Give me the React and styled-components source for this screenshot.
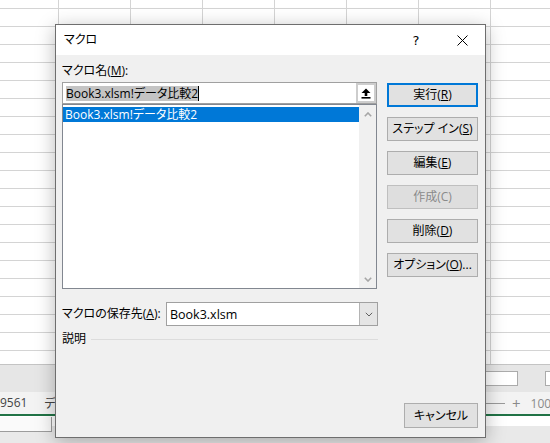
import React from 'react';
import styled, { createGlobalStyle } from 'styled-components';

const uiFont = `"Open Sans", "Noto Sans CJK JP", sans-serif`;

const GlobalStyle = createGlobalStyle`
  html, body {
    margin: 0;
    padding: 0;
  }
  body {
    width: 550px;
    height: 443px;
    overflow: hidden;
    background: #fff;
  }
`;

const Screen = styled.div`
  position: relative;
  width: 550px;
  height: 443px;
  overflow: hidden;
  display: flex;
  flex-direction: column;
  font-family: ${uiFont};
  font-size: 12px;
  font-feature-settings: "palt";
  color: #000;
`;

/* excel behind the dialog */

const Sheet = styled.div`
  flex: none;
  height: 364px;
  background-color: #fff;
  background-image:
    repeating-linear-gradient(to bottom, transparent 0, transparent 8px, #d4d4d4 8px, #d4d4d4 9px, transparent 9px, transparent 18px),
    repeating-linear-gradient(to right, transparent 0, transparent 58px, #d4d4d4 58px, #d4d4d4 59px, transparent 59px, transparent 72px);
`;

const TabBar = styled.div`
  flex: none;
  height: 27px;
  border-top: 1px solid #c4c4c4;
  background: #e6e6e6;
  display: flex;
  align-items: center;
  padding-left: 430px;
`;

const ScrollBox = styled.div`
  flex: none;
  width: ${p => p.$w}px;
  height: 13px;
  margin-left: ${p => p.$gap || 0}px;
  background: #fff;
  border: 1px solid #ababab;
`;

const StatusBar = styled.div`
  flex: none;
  height: 22px;
  background: #f3f3f3;
  display: flex;
  align-items: center;
  white-space: nowrap;
  color: #444;
`;

const StatusLeft = styled.div`
  flex: none;
  width: 430px;
  display: flex;
  gap: 17px;
`;

const ZoomTrack = styled.div`
  flex: none;
  width: 75px;
  height: 1px;
  background: #9a9a9a;
`;

const ZoomText = styled.span`
  flex: none;
  margin-left: ${p => p.$gap}px;
  color: #8a8a8a;
  font-size: ${p => p.$size || 12}px;
`;

const GreenRule = styled.div`
  flex: none;
  height: 2px;
  background: #217346;
`;

const Footer = styled.div`
  flex: 1;
  background: linear-gradient(to bottom, #fff 0, #fff 10px, #e9e9e9 10px);
`;

const FooterBox = styled.div`
  width: 51px;
  height: 14px;
  margin-top: 1px;
  background: #fafafa;
  border-right: 1px solid #9c9c9c;
  border-bottom: 1px solid #9c9c9c;
`;

/* dialog */

const Dialog = styled.div`
  position: absolute;
  left: 55px;
  top: 24px;
  width: 431px;
  height: 414px;
  box-sizing: border-box;
  border: 1px solid #6e6e6e;
  background: #f0f0f0;
  box-shadow: 0 4px 18px rgba(0, 0, 0, 0.28);
  display: flex;
  flex-direction: column;
`;

const TitleBar = styled.div`
  flex: none;
  height: 30px;
  background: #fff;
  display: flex;
  align-items: center;
`;

const Title = styled.div`
  flex: 1;
  padding-left: 8px;
  line-height: 16px;
`;

const TitleButton = styled.div`
  flex: none;
  width: 46px;
  height: 30px;
  display: flex;
  align-items: center;
  justify-content: center;
  font-family: "DejaVu Sans", sans-serif;
  font-size: 13px;
`;

const Body = styled.div`
  flex: 1;
  display: flex;
  flex-direction: column;
  padding: 8px 7px 9px 6px;
`;

const Label = styled.div`
  line-height: 16px;
  white-space: nowrap;
  margin-bottom: ${p => p.$mb || 0}px;
  flex: ${p => (p.$w ? 'none' : 'initial')};
  width: ${p => (p.$w ? `${p.$w}px` : 'auto')};
`;

const MainRow = styled.div`
  display: grid;
  grid-template-columns: 315px 91px;
  column-gap: 10px;
`;

const LeftCol = styled.div`
  display: flex;
  flex-direction: column;
`;

const NameInput = styled.div`
  box-sizing: border-box;
  height: 22px;
  border: 1px solid #a0a0a0;
  background: #fff;
  display: flex;
  align-items: center;
  padding-left: 3px;
`;

const Selected = styled.span`
  background: #c4c4c4;
  line-height: 15px;
  white-space: nowrap;
`;

const Caret = styled.span`
  width: 1px;
  height: 15px;
  background: #000;
`;

const UpButton = styled.div`
  margin-left: auto;
  box-sizing: border-box;
  width: 20px;
  height: 20px;
  border: 2px solid #cdcdcd;
  background: #fff;
  display: flex;
  align-items: center;
  justify-content: center;
`;

const ListBox = styled.div`
  box-sizing: border-box;
  height: 185px;
  border: 1px solid #828790;
  background: #fff;
  display: flex;
`;

const ListItems = styled.div`
  flex: 1;
  padding-top: 2px;
`;

const ListItem = styled.div`
  height: 15px;
  line-height: 15px;
  padding-left: 2px;
  background: #0078d7;
  color: #fff;
  white-space: nowrap;
`;

const ScrollTrack = styled.div`
  flex: none;
  width: 17px;
  background: #f0f0f0;
  display: flex;
  flex-direction: column;
  align-items: center;
  justify-content: space-between;
  padding: 7px 0 6px;
`;

const ButtonCol = styled.div`
  display: flex;
  flex-direction: column;
  gap: 10px;
  padding-top: 1px;
`;

const Button = styled.div`
  box-sizing: border-box;
  width: ${p => p.$w || 91}px;
  height: ${p => p.$h || 24}px;
  display: flex;
  align-items: center;
  justify-content: center;
  background: ${p => (p.$disabled ? '#dedede' : '#e1e1e1')};
  border: ${p => (p.$default ? '2px solid #0078d7' : p.$disabled ? '1px solid #bfbfbf' : '1px solid #adadad')};
  color: ${p => (p.$disabled ? '#8a8a8a' : '#000')};
  white-space: nowrap;
  line-height: 16px;
`;

const SaveRow = styled.div`
  display: flex;
  align-items: center;
  margin-top: 13px;
  height: 24px;
`;

const Combo = styled.div`
  box-sizing: border-box;
  width: 212px;
  height: 24px;
  border: 1px solid #a0a0a0;
  background: #fff;
  display: flex;
  align-items: stretch;
`;

const ComboText = styled.div`
  flex: 1;
  display: flex;
  align-items: center;
  padding-left: 3px;
  font-size: 12.5px;
`;

const ComboButton = styled.div`
  flex: none;
  width: 17px;
  border-left: 1px solid #b4b4b4;
  background: #e5e5e5;
  display: flex;
  align-items: center;
  justify-content: center;
`;

const GroupRow = styled.div`
  display: flex;
  align-items: center;
  margin-top: 5px;
  height: 16px;
`;

const GroupRule = styled.div`
  flex: 1;
  height: 1px;
  margin: 1px 100px 0 5px;
  background: #dcdcdc;
`;

const FooterRow = styled.div`
  margin-top: auto;
  display: flex;
  justify-content: flex-end;
`;

const Chevron = ({ up, color, w = 8, h = 5, sw = 1.6 }) => (
  <svg width={w} height={h} viewBox="0 0 8 5" style={{ display: 'block' }}>
    <polyline
      points={up ? '0.8,4.2 4,1 7.2,4.2' : '0.8,0.8 4,4 7.2,0.8'}
      fill="none"
      stroke={color}
      strokeWidth={sw}
    />
  </svg>
);

const UpArrowIcon = () => (
  <svg width="10" height="11" viewBox="0 0 10 11" style={{ display: 'block' }}>
    <polygon points="5,0.5 9.5,5 6.3,5 6.3,8 3.7,8 3.7,5 0.5,5" fill="#000" />
    <rect x="0.5" y="9" width="9" height="1.6" fill="#000" />
  </svg>
);

const CloseIcon = () => (
  <svg width="11" height="11" viewBox="0 0 11 11" style={{ display: 'block' }}>
    <path d="M0.5 0.5 L10.5 10.5 M10.5 0.5 L0.5 10.5" stroke="#000" strokeWidth="1" />
  </svg>
);

const buttons = [
  { label: '実行', key: 'R', isDefault: true },
  { label: 'ステップ イン', key: 'S' },
  { label: '編集', key: 'E' },
  { label: '作成', key: 'C', disabled: true },
  { label: '削除', key: 'D' },
  { label: 'オプション', key: 'O', tail: '...' },
];

export default function App() {
  return (
    <Screen>
      <GlobalStyle />
      <Sheet />
      <TabBar>
        <ScrollBox $w={86} />
        <ScrollBox $w={20} $gap={27} />
      </TabBar>
      <StatusBar>
        <StatusLeft>
          <span>9561</span>
          <span>データ</span>
        </StatusLeft>
        <ZoomTrack />
        <ZoomText $gap={7} $size={15}>+</ZoomText>
        <ZoomText $gap={10}>100%</ZoomText>
      </StatusBar>
      <GreenRule />
      <Footer>
        <FooterBox />
      </Footer>

      <Dialog>
        <TitleBar>
          <Title>マクロ</Title>
          <TitleButton>?</TitleButton>
          <TitleButton>
            <CloseIcon />
          </TitleButton>
        </TitleBar>
        <Body>
          <Label $mb={3}>
            マクロ名(<u>M</u>):
          </Label>
          <MainRow>
            <LeftCol>
              <NameInput>
                <Selected>Book3.xlsm!データ比較2</Selected>
                <Caret />
                <UpButton>
                  <UpArrowIcon />
                </UpButton>
              </NameInput>
              <ListBox>
                <ListItems>
                  <ListItem>Book3.xlsm!データ比較2</ListItem>
                </ListItems>
                <ScrollTrack>
                  <Chevron up color="#a6a6a6" />
                  <Chevron color="#a6a6a6" />
                </ScrollTrack>
              </ListBox>
            </LeftCol>
            <ButtonCol>
              {buttons.map(b => (
                <Button key={b.key} $default={b.isDefault} $disabled={b.disabled}>
                  {b.label}(
                  {b.disabled ? b.key : <u>{b.key}</u>}
                  ){b.tail}
                </Button>
              ))}
            </ButtonCol>
          </MainRow>
          <SaveRow>
            <Label $w={104}>
              マクロの保存先(<u>A</u>):
            </Label>
            <Combo>
              <ComboText>Book3.xlsm</ComboText>
              <ComboButton>
                <Chevron color="#606060" sw={1} />
              </ComboButton>
            </Combo>
          </SaveRow>
          <GroupRow>
            <Label>説明</Label>
            <GroupRule />
          </GroupRow>
          <FooterRow>
            <Button $w={74} $h={25}>キャンセル</Button>
          </FooterRow>
        </Body>
      </Dialog>
    </Screen>
  );
}
